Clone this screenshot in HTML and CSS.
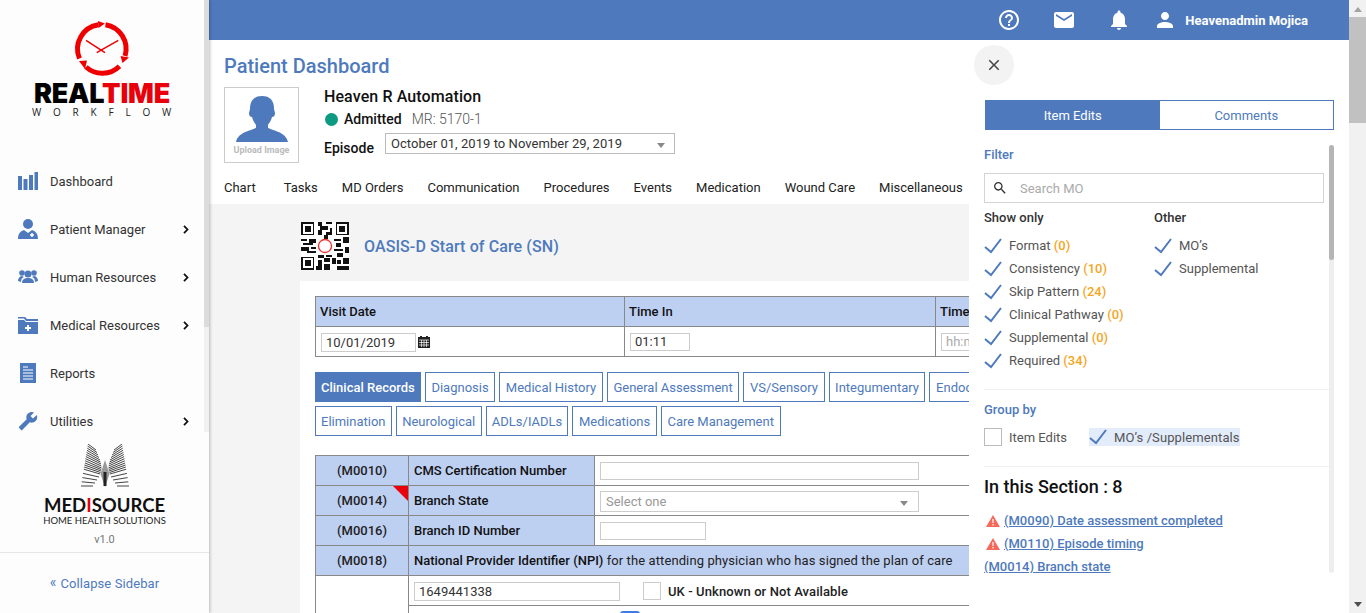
FILE: index.html
```html
<!DOCTYPE html>
<html lang="en">
<head>
    <meta charset="UTF-8">
    <title>Patient Dashboard</title>
    <link rel="stylesheet" href="styles.css">
</head>
<body>
<!--sidebar-->
<div class="sidebar">
    <div class="sideTop">
        <div class="sideContent">
            <div class="logo">
                <svg class="clock" width="60" height="60" viewBox="0 0 60 60">
                    <g fill="none" stroke="#ee0000" stroke-width="5">
                        <path d="M7.500 39.500 A24.500 24.500 0 0 1 26.500 5.700"/>
                        <path d="M33.500 5.700 A24.500 24.500 0 0 1 53 37"/>
                        <path d="M47.500 47.200 A24.500 24.500 0 0 1 14 48"/>
                    </g>
                    <g fill="#ee0000">
                        <path d="M26 2 L33 4.500 L26.500 9 Z"/>
                        <path d="M48.500 37 L57 38.500 L50.500 44 Z"/>
                        <path d="M7 42 L15 41.500 L13 50 Z"/>
                    </g>
                    <path d="M14 21.300 L33 33.700 M46.300 21.300 L24.700 33.700" fill="none" stroke="#ee0000" stroke-width="1.500"/>
                </svg>
                <div class="brand"><span>REAL</span><span class="red">TIME</span></div>
                <div class="brandSub">WORKFLOW</div>
            </div>
            <div class="menu">
                <div class="menuItem">
                    <svg class="menuIcon" viewBox="0 0 20 20"><path d="M0 5h4v14H0zM5.500 8h4v11h-4zM11 4h4v15h-4zM16.500 1h3.500v18h-3.500z" fill="#4e7abd"/></svg>
                    <span>Dashboard</span>
                </div>
                <div class="menuItem">
                    <svg class="menuIcon" viewBox="0 0 20 20"><circle cx="10" cy="5" r="5" fill="#4e7abd"/><path d="M0 20c0-6 3-8 6-9l4 3 4-3c3 1 6 3 6 9z" fill="#4e7abd"/><path d="M14 14v4M12 16h4" stroke="#fff" stroke-width="1.500"/></svg>
                    <span>Patient Manager</span>
                    <svg class="chevron" viewBox="0 0 6 9"><path d="M1 .8l3.500 3.700L1 8.200" fill="none" stroke="#111" stroke-width="1.800"/></svg>
                </div>
                <div class="menuItem">
                    <svg class="menuIcon" viewBox="0 0 20 20"><g fill="#4e7abd"><circle cx="10" cy="7" r="3.500"/><circle cx="4" cy="6" r="2.800"/><circle cx="16" cy="6" r="2.800"/><path d="M4 16c0-4 3-5 6-5s6 1 6 5z"/><path d="M0 14c0-3 2-5 4-5l2 1c-2 1-3 2-3 5zM20 14c0-3-2-5-4-5l-2 1c2 1 3 2 3 5z"/></g></svg>
                    <span>Human Resources</span>
                    <svg class="chevron" viewBox="0 0 6 9"><path d="M1 .8l3.500 3.700L1 8.200" fill="none" stroke="#111" stroke-width="1.800"/></svg>
                </div>
                <div class="menuItem">
                    <svg class="menuIcon" viewBox="0 0 20 20"><path d="M0 2h7l2 2h11v2H8L6 3.500H0zM0 5h6l2 2h12v12H0z" fill="#4e7abd"/><path d="M10 10v6M7 13h6" stroke="#fff" stroke-width="2"/></svg>
                    <span>Medical Resources</span>
                    <svg class="chevron" viewBox="0 0 6 9"><path d="M1 .8l3.500 3.700L1 8.200" fill="none" stroke="#111" stroke-width="1.800"/></svg>
                </div>
                <div class="menuItem">
                    <svg class="menuIcon" viewBox="0 0 20 20"><path d="M2 0h16v20H2z" fill="#4e7abd"/><path d="M5 4h5M5 7h10M5 10h10M5 13h10M5 16h10" stroke="#fff" stroke-width="1"/></svg>
                    <span>Reports</span>
                </div>
                <div class="menuItem">
                    <svg class="menuIcon" viewBox="0 0 24 24"><path transform="matrix(-1 0 0 1 24 0)" d="M22.700 19l-9.100-9.100c.9-2.300.4-5-1.500-6.900-2-2-5-2.400-7.400-1.300L9 6 6 9 1.600 4.700C.4 7.100.9 10.100 2.900 12.100c1.900 1.900 4.600 2.400 6.900 1.500l9.100 9.100c.4.4 1 .4 1.400 0l2.300-2.300c.5-.4.5-1.100.1-1.400z" fill="#4e7abd"/></svg>
                    <span>Utilities</span>
                    <svg class="chevron" viewBox="0 0 6 9"><path d="M1 .8l3.500 3.700L1 8.200" fill="none" stroke="#111" stroke-width="1.800"/></svg>
                </div>
            </div>
        </div>
        <div class="sideBar"><div class="sideThumb"></div></div>
    </div>
    <div class="sideBottom">
        <svg class="mLogo" width="48" height="43" viewBox="0 0 48 43">
            <path d="M24 16L19.500 30 24 43 28.500 30z" fill="#999"/>
            <path d="M22.500 28h3v14h-3z" fill="#222"/>
            <g fill="none" stroke="#444" stroke-width="1">
                <path d="M7 0L15 6M6.600 2L16 8.500M6.300 4.200L17 11M6 6.300L18 13.500M5.600 8.400L19 16M5.200 10.500L19.500 18M4.900 12.600L20 20M4.500 14.700L20.300 22M4.200 16.800L20.500 24M3.900 19L20.300 25.500M3.500 21L20 27M3.200 23L19.500 28.500M2.800 25.200L19 30M2.100 29.400L18 33M1.400 33.600L16 36M.7 37.800L14 39M0 42L12 42"/>
                <path transform="matrix(-1 0 0 1 48 0)" d="M7 0L15 6M6.600 2L16 8.500M6.300 4.200L17 11M6 6.300L18 13.500M5.600 8.400L19 16M5.200 10.500L19.500 18M4.900 12.600L20 20M4.500 14.700L20.300 22M4.200 16.800L20.500 24M3.900 19L20.300 25.500M3.500 21L20 27M3.200 23L19.500 28.500M2.800 25.200L19 30M2.100 29.400L18 33M1.400 33.600L16 36M.7 37.800L14 39M0 42L12 42"/>
            </g>
        </svg>
        <div class="mName">MED<span class="red">I</span>SOURCE</div>
        <div class="mSub">HOME HEALTH SOLUTIONS</div>
        <div class="version">v1.0</div>
        <div class="collapse"><span class="collapseArrow">&laquo;</span>Collapse Sidebar</div>
    </div>
</div>

<!--main-->
<div class="main">
    <div class="topBar">
        <svg class="topIcon" viewBox="0 0 24 24"><path d="M11 18h2v-2h-2v2zm1-16C6.480 2 2 6.480 2 12s4.480 10 10 10 10-4.480 10-10S17.520 2 12 2zm0 18c-4.410 0-8-3.590-8-8s3.590-8 8-8 8 3.590 8 8-3.590 8-8 8zm0-14c-2.210 0-4 1.790-4 4h2c0-1.100.9-2 2-2s2 .9 2 2c0 2-3 1.750-3 5h2c0-2.250 3-2.500 3-5 0-2.210-1.790-4-4-4z"/></svg>
        <svg class="topIcon" viewBox="0 0 24 24"><path d="M20 4H4c-1.100 0-1.990.9-1.990 2L2 18c0 1.100.9 2 2 2h16c1.100 0 2-.9 2-2V6c0-1.100-.9-2-2-2zm0 4l-8 5-8-5V6l8 5 8-5v2z"/></svg>
        <svg class="topIcon bellIcon" viewBox="0 0 24 24"><path d="M12 22c1.100 0 2-.9 2-2h-4c0 1.100.89 2 2 2zm6-6v-5c0-3.070-1.640-5.640-4.500-6.320V4c0-.83-.67-1.500-1.500-1.500s-1.500.67-1.500 1.500v.68C7.630 5.360 6 7.920 6 11v5l-2 2v1h16v-1l-2-2z"/></svg>
        <svg class="topIcon userIcon" viewBox="0 0 24 24"><path d="M12 12c2.210 0 4-1.790 4-4s-1.790-4-4-4-4 1.790-4 4 1.790 4 4 4zm0 2c-2.670 0-8 1.340-8 4v2h16v-2c0-2.660-5.330-4-8-4z"/></svg>
        <span class="userName">Heavenadmin Mojica</span>
    </div>

    <div class="pageHead">
        <div class="pageTitle">Patient Dashboard</div>
        <div class="patient">
            <div class="avatar">
                <svg width="52" height="46" viewBox="0 0 52 48" preserveAspectRatio="none"><path d="M26 0c8 0 12 5 12 13 0 2 1 3 1 5s-1 4-3 4c-1 4-3 7-4 8v3c4 3 18 4 20 15H0c2-11 16-12 20-15v-3c-1-1-3-4-4-8-2 0-3-2-3-4s1-3 1-5c0-8 4-13 12-13z" fill="#4e7abd"/></svg>
                <span>Upload Image</span>
            </div>
            <div class="patientInfo">
                <div class="patientName">Heaven R Automation</div>
                <div class="statusRow">
                    <i class="statusDot"></i>
                    <span class="statusText">Admitted</span>
                    <span class="mrText">MR: 5170-1</span>
                </div>
                <div class="episodeRow">
                    <span class="episodeLabel">Episode</span>
                    <div class="episodeSelect">
                        <span>October 01, 2019 to November 29, 2019</span>
                        <i class="caret"></i>
                    </div>
                </div>
            </div>
        </div>
        <div class="pageNav">
            <span class="navFirst">Chart</span>
            <span>Tasks</span>
            <span>MD Orders</span>
            <span>Communication</span>
            <span>Procedures</span>
            <span>Events</span>
            <span>Medication</span>
            <span>Wound Care</span>
            <span>Miscellaneous</span>
        </div>
    </div>

    <div class="formArea">
        <div class="formTitle">
            <svg class="qr" width="48" height="48" viewBox="0 0 25 25" shape-rendering="crispEdges">
                <rect width="25" height="25" fill="#fff"/>
                <path d="M0 0h7v7H0zM1 1v5h5V1zM2 2h3v3H2zM18 0h7v7h-7zM19 1v5h5V1zM20 2h3v3h-3zM0 18h7v7H0zM1 19v5h5v-5zM2 20h3v3H2z" fill-rule="evenodd" fill="#111"/>
                <path d="M9 0h2v2H9zM13 0h3v1h-3zM10 2h4v2h-4zM9 4h2v3H9zM13 5h3v2h-3zM12 7h2v2h-2zM15 3h1v2h-1zM0 9h3v1H0zM4 9h4v2H4zM1 11h5v1H1zM0 13h4v2H0zM5 13h3v1H5zM3 15h5v1H3zM17 9h4v1h-4zM22 8h3v3h-3zM18 11h3v2h-3zM17 14h5v1h-5zM23 13h2v3h-2zM19 16h3v2h-3zM9 17h3v2H9zM13 17h3v1h-3zM9 20h2v3H9zM12 19h3v2h-3zM16 19h2v3h-2zM12 22h3v3h-3zM19 20h2v2h-2zM22 19h3v3h-3zM19 23h6v2h-6zM8 23h3v2H8z" fill="#111"/>
                <circle cx="12.500" cy="12.500" r="3.400" fill="#fff" stroke="#ee3333" stroke-width="0.7" shape-rendering="auto"/>
            </svg>
            <span>OASIS-D Start of Care (SN)</span>
        </div>

        <div class="sheet">
            <table class="visitTable">
                <tr>
                    <th class="colVisit">Visit Date</th>
                    <th class="colTime">Time In</th>
                    <th>Time Out</th>
                </tr>
                <tr>
                    <td>
                        <div class="dateCell">
                            <div class="field dateField">10/01/2019</div>
                            <svg width="12" height="12" viewBox="0 0 12 12"><path d="M2 0h2v1h4V0h2v1h2v11H0V1h2z" fill="#222"/><path d="M1 4h10M1 6.500h10M1 9h10M3.500 4v7M6 4v7M8.500 4v7" stroke="#fff" stroke-width="0.7"/></svg>
                        </div>
                    </td>
                    <td><div class="field timeField">01:11</div></td>
                    <td><div class="field timeField placeholder">hh:mm</div></td>
                </tr>
            </table>

            <div class="formTabs">
                <div class="formTab active">Clinical Records</div>
                <div class="formTab">Diagnosis</div>
                <div class="formTab">Medical History</div>
                <div class="formTab">General Assessment</div>
                <div class="formTab">VS/Sensory</div>
                <div class="formTab">Integumentary</div>
                <div class="formTab">Endocrine</div>
                <div class="formTab tight">Elimination</div>
                <div class="formTab">Neurological</div>
                <div class="formTab tight">ADLs/IADLs</div>
                <div class="formTab">Medications</div>
                <div class="formTab">Care Management</div>
            </div>

            <table class="questionTable">
                <tr>
                    <td class="code">(M0010)</td>
                    <td class="label colLabel">CMS Certification Number</td>
                    <td class="answer"><div class="field wideField"></div></td>
                </tr>
                <tr>
                    <td class="code flagged">(M0014)</td>
                    <td class="label">Branch State</td>
                    <td class="answer">
                        <div class="field wideField selectField"><span>Select one</span><i class="caret"></i></div>
                    </td>
                </tr>
                <tr>
                    <td class="code">(M0016)</td>
                    <td class="label">Branch ID Number</td>
                    <td class="answer"><div class="field idField"></div></td>
                </tr>
                <tr>
                    <td class="code">(M0018)</td>
                    <td class="label" colspan="2">National Provider Identifier (NPI) <span class="labelNormal">for the attending physician who has signed the plan of care</span></td>
                </tr>
                <tr>
                    <td class="empty" rowspan="2"></td>
                    <td class="answer" colspan="2">
                        <div class="npiRow">
                            <div class="field npiField">1649441338</div>
                            <i class="box"></i>
                            <span class="npiText">UK - Unknown or Not Available</span>
                        </div>
                    </td>
                </tr>
                <tr>
                    <td class="answer lastRow" colspan="2"><i class="blueBox"></i></td>
                </tr>
            </table>
        </div>
    </div>

    <!--right panel-->
    <div class="panel">
        <div class="closeBtn">
            <svg width="18" height="18" viewBox="0 0 24 24"><path d="M19 6.410L17.590 5 12 10.590 6.410 5 5 6.410 10.590 12 5 17.590 6.410 19 12 13.410 17.590 19 19 17.590 13.410 12z" fill="#444"/></svg>
        </div>
        <div class="panelTabs">
            <div class="panelTab active">Item Edits</div>
            <div class="panelTab">Comments</div>
        </div>
        <div class="panelScroll">
            <div class="panelBody">
                <div class="blueHead filterHead">Filter</div>
                <div class="searchBox">
                    <svg width="16" height="16" viewBox="0 0 24 24"><path d="M15.500 14h-.79l-.28-.27C15.410 12.590 16 11.110 16 9.500 16 5.910 13.090 3 9.500 3S3 5.910 3 9.500 5.910 16 9.500 16c1.610 0 3.090-.59 4.230-1.570l.27.28v.79l5 4.990L20.490 19l-4.990-5zm-6 0C7.010 14 5 11.990 5 9.500S7.010 5 9.500 5 14 7.010 14 9.500 11.990 14 9.500 14z" fill="#333"/></svg>
                    <span>Search MO</span>
                </div>
                <div class="filterCols">
                    <div class="filterCol">
                        <div class="colHead">Show only</div>
                        <div class="checkRow"><svg class="check" viewBox="0 0 18 16"><path d="M1 9l6 5L17 1" /></svg>Format <b>(0)</b></div>
                        <div class="checkRow"><svg class="check" viewBox="0 0 18 16"><path d="M1 9l6 5L17 1" /></svg>Consistency <b>(10)</b></div>
                        <div class="checkRow"><svg class="check" viewBox="0 0 18 16"><path d="M1 9l6 5L17 1" /></svg>Skip Pattern <b>(24)</b></div>
                        <div class="checkRow"><svg class="check" viewBox="0 0 18 16"><path d="M1 9l6 5L17 1" /></svg>Clinical Pathway <b>(0)</b></div>
                        <div class="checkRow"><svg class="check" viewBox="0 0 18 16"><path d="M1 9l6 5L17 1" /></svg>Supplemental <b>(0)</b></div>
                        <div class="checkRow"><svg class="check" viewBox="0 0 18 16"><path d="M1 9l6 5L17 1" /></svg>Required <b>(34)</b></div>
                    </div>
                    <div class="filterCol">
                        <div class="colHead">Other</div>
                        <div class="checkRow"><svg class="check" viewBox="0 0 18 16"><path d="M1 9l6 5L17 1" /></svg>MO’s</div>
                        <div class="checkRow"><svg class="check" viewBox="0 0 18 16"><path d="M1 9l6 5L17 1" /></svg>Supplemental</div>
                    </div>
                </div>
                <div class="groupSection">
                    <div class="blueHead">Group by</div>
                    <div class="groupRow">
                        <div class="groupItem"><i class="box smallBox"></i>Item Edits</div>
                        <div class="groupItem selected"><svg class="check" viewBox="0 0 18 16"><path d="M1 9l6 5L17 1" /></svg>MO’s /Supplementals</div>
                    </div>
                </div>
                <div class="sectionHead">In this Section : 8</div>
                <div class="linkRow">
                    <svg class="warn" viewBox="0 0 14 12"><path d="M7 0l7 12H0z" fill="#f4695c"/><path d="M7 4v4M7 9v1.500" stroke="#fff" stroke-width="1.200"/></svg>
                    <a href="#">(M0090) Date assessment completed</a>
                </div>
                <div class="linkRow">
                    <svg class="warn" viewBox="0 0 14 12"><path d="M7 0l7 12H0z" fill="#f4695c"/><path d="M7 4v4M7 9v1.500" stroke="#fff" stroke-width="1.200"/></svg>
                    <a href="#">(M0110) Episode timing</a>
                </div>
                <div class="linkRow"><a href="#">(M0014) Branch state</a></div>
            </div>
            <div class="panelTrack"><div class="panelThumb"></div></div>
        </div>
    </div>
</div>

<!--page scrollbar-->
<div class="pageBar">
    <i class="barUp"></i>
    <div class="pageThumb"></div>
    <div class="barFill"></div>
    <i class="barDown"></i>
</div>
</body>
</html>
```

FILE: styles.css
```css
* {
    margin: 0;
    padding: 0;
    box-sizing: border-box;
}

html, body {
    height: 100%;
    overflow: hidden;
}

body {
    display: flex;
    font-family: Roboto, "Liberation Sans", sans-serif;
    font-size: 13px;
    color: #222;
    background: #fff;
}

.red {
    color: #e8000b;
}

/* sidebar */
.sidebar {
    width: 209px;
    flex-shrink: 0;
    display: flex;
    flex-direction: column;
    background: #fdfdfd;
    box-shadow: 1px 0 3px rgba(0, 0, 0, 0.25);
    position: relative;
    z-index: 2;
}

.sideTop {
    height: 432px;
    display: flex;
}

.sideContent {
    flex-grow: 1;
}

.sideBar {
    width: 5px;
    background: #f1f1f1;
}

.sideThumb {
    height: 327px;
    background: #dcdcdc;
}

.logo {
    height: 157px;
    padding-top: 19px;
    display: flex;
    flex-direction: column;
    align-items: center;
}

.clock {
    flex-shrink: 0;
}

.brand {
    font-family: Inter, "Liberation Sans", sans-serif;
    font-weight: 900;
    font-size: 27px;
    line-height: 21px;
    margin-top: 4px;
    letter-spacing: -0.2px;
    color: #000;
}

.brandSub {
    font-family: "Open Sans", sans-serif;
    font-size: 10px;
    line-height: 12px;
    margin-top: 2px;
    letter-spacing: 11.800px;
    margin-right: -11px;
    color: #222;
}

.menuItem {
    height: 48px;
    padding-left: 18px;
    display: flex;
    align-items: center;
    font-size: 13px;
    color: #333;
}

.menuIcon {
    width: 20px;
    height: 20px;
    margin-right: 12px;
    flex-shrink: 0;
}

.chevron {
    width: 6px;
    height: 9px;
    margin-left: auto;
    margin-right: 15px;
}

.sideBottom {
    flex-grow: 1;
    display: flex;
    flex-direction: column;
    align-items: center;
}

.mLogo {
    margin-top: 12px;
}

.mName {
    font-family: Lato, sans-serif;
    font-weight: 700;
    font-size: 18.500px;
    line-height: 18px;
    margin-top: 9px;
    color: #111;
}

.mSub {
    font-family: Lato, sans-serif;
    font-size: 9.500px;
    line-height: 12px;
    margin-top: 1px;
    color: #222;
}

.version {
    font-size: 11px;
    line-height: 14px;
    margin-top: 6px;
    color: #777;
}

.collapse {
    width: 100%;
    flex-grow: 1;
    margin-top: 5px;
    border-top: 1px solid #e6e6e6;
    display: flex;
    align-items: center;
    justify-content: center;
    gap: 4px;
    font-size: 13px;
    letter-spacing: 0.1px;
    color: #4e7abd;
}

.collapseArrow {
    font-size: 14px;
    margin-bottom: 2px;
}

/* main */
.main {
    flex-grow: 1;
    min-width: 0;
    display: flex;
    flex-direction: column;
    position: relative;
    overflow: hidden;
}

.topBar {
    height: 40px;
    flex-shrink: 0;
    background: #4e7abd;
    display: flex;
    align-items: center;
    justify-content: flex-end;
    padding-right: 41px;
}

.topIcon {
    width: 24px;
    height: 24px;
    fill: #fff;
    margin-right: 31px;
}

.bellIcon {
    margin-right: 22px;
}

.userIcon {
    margin-right: 8px;
}

.userName {
    font-size: 13px;
    font-weight: 700;
    color: #fff;
}

.pageHead {
    height: 164px;
    flex-shrink: 0;
    padding: 14px 0 0 15px;
    background: #fff;
}

.pageTitle {
    font-size: 20px;
    font-weight: 500;
    line-height: 24px;
    color: #4e7abd;
}

.patient {
    display: flex;
    margin-top: 9px;
}

.avatar {
    width: 75px;
    height: 76px;
    border: 1px solid #ccc;
    display: flex;
    flex-direction: column;
    align-items: center;
    padding-top: 8px;
}

.avatar span {
    font-size: 9px;
    font-weight: 700;
    color: #bbb;
    margin-top: 3px;
}

.patientInfo {
    margin-left: 25px;
}

.patientName {
    font-size: 16px;
    font-weight: 500;
    line-height: 18px;
    letter-spacing: 0.1px;
    padding-top: 1px;
    height: 19px;
    color: #111;
}

.statusRow {
    display: flex;
    align-items: center;
    margin-top: 4px;
    height: 18px;
}

.statusDot {
    width: 13px;
    height: 13px;
    border-radius: 50%;
    background: #0d9a82;
    margin: 1px 6px 0 1px;
}

.statusText {
    font-size: 14px;
    font-weight: 500;
    color: #111;
}

.mrText {
    font-size: 14px;
    font-weight: 300;
    color: #555;
    margin-left: 10px;
}

.episodeRow {
    display: flex;
    align-items: flex-start;
    margin-top: 5px;
}

.episodeLabel {
    font-size: 14px;
    font-weight: 500;
    line-height: 20px;
    margin: 5px 11px 0 0;
    color: #111;
}

.episodeSelect {
    width: 290px;
    height: 21px;
    border: 1px solid #bbb;
    display: flex;
    align-items: center;
    justify-content: space-between;
    padding: 0 9px 0 5px;
    font-size: 13px;
    letter-spacing: 0.05px;
    color: #333;
}

.caret {
    width: 0;
    height: 0;
    border-left: 4px solid transparent;
    border-right: 4px solid transparent;
    border-top: 5px solid #888;
    margin-top: 3px;
}

.pageNav {
    display: flex;
    gap: 24px;
    margin-top: 17px;
    font-size: 13px;
    line-height: 15px;
    color: #222;
}

.navFirst {
    margin-right: 4px;
}

/* form */
.formArea {
    flex-grow: 1;
    min-height: 0;
    background: #f4f4f4;
    padding-left: 91px;
    overflow: hidden;
}

.formTitle {
    height: 77px;
    padding: 18px 0 0 1px;
    display: flex;
    align-items: flex-start;
}

.formTitle span {
    font-size: 16px;
    font-weight: 500;
    letter-spacing: 0.1px;
    color: #4e7abd;
    margin: 15px 0 0 15px;
}

.sheet {
    width: 900px;
    height: 400px;
    padding: 15px;
    background: #fff;
}

.visitTable, .questionTable {
    border-collapse: collapse;
    table-layout: fixed;
    width: 860px;
}

.visitTable th {
    height: 30px;
    background: #bed0f2;
    border: 1px solid #888;
    text-align: left;
    padding-left: 4px;
    font-weight: 500;
    color: #111;
}

.visitTable td {
    height: 30px;
    border: 1px solid #888;
    padding-left: 5px;
}

.colVisit {
    width: 309px;
}

.colTime {
    width: 311px;
}

.field {
    height: 18px;
    border: 1px solid #ccc;
    background: #fff;
    padding-left: 4px;
    line-height: 16px;
    font-size: 13px;
    color: #333;
}

.dateCell {
    display: flex;
    align-items: center;
    gap: 2px;
}

.dateField {
    width: 95px;
    height: 19px;
    line-height: 18px;
    margin-top: 1px;
}

.timeField {
    width: 60px;
}

.placeholder {
    color: #aaa;
}

.formTabs {
    width: 700px;
    display: flex;
    flex-wrap: wrap;
    gap: 4px;
    margin-top: 15px;
}

.formTab {
    height: 30px;
    line-height: 29px;
    padding: 0 5.600px;
    border: 1px solid #4e7abd;
    color: #4e7abd;
    font-size: 13px;
}

.formTab.tight {
    padding: 0 5px;
}

.formTab.active {
    padding: 0 5px;
    background: #4e7abd;
    color: #fff;
    font-weight: 500;
}

.questionTable {
    margin-top: 19px;
}

.questionTable td {
    height: 30px;
    border: 1px solid #888;
}

.code {
    width: 93px;
    background: #bed0f2;
    text-align: center;
    font-weight: 500;
    color: #222;
}

.flagged {
    position: relative;
}

.flagged::after {
    content: "";
    position: absolute;
    top: 0;
    right: 0;
    border-top: 15px solid #e8000b;
    border-left: 15px solid transparent;
}

.label {
    background: #bed0f2;
    padding-left: 5px;
    font-weight: 500;
    color: #111;
}

.colLabel {
    width: 186px;
}

.labelNormal {
    font-weight: 400;
    letter-spacing: 0.1px;
    color: #222;
}

.answer {
    padding-left: 5px;
}

.wideField {
    width: 319px;
}

.selectField {
    display: flex;
    align-items: center;
    justify-content: space-between;
    height: 21px;
    margin-top: 1px;
    padding: 1px 10px 0 5px;
    color: #999;
}

.idField {
    width: 106px;
}

.npiRow {
    display: flex;
    align-items: center;
    padding-top: 1px;
}

.npiField {
    width: 206px;
    height: 19px;
    line-height: 18px;
}

.box {
    display: block;
    width: 18px;
    height: 18px;
    border: 1px solid #ccc;
    background: #fff;
    margin-left: 23px;
}

.npiText {
    margin-left: 7px;
    font-weight: 500;
    letter-spacing: 0.1px;
    color: #222;
}

.empty {
    background: #fff;
}

.lastRow {
    vertical-align: top;
    padding-left: 211px;
    padding-top: 5px;
}

.blueBox {
    display: block;
    width: 20px;
    height: 20px;
    border-radius: 3px;
    background: #3f7be0;
}

/* right panel */
.panel {
    position: absolute;
    top: 40px;
    right: 0;
    bottom: 0;
    width: 380px;
    background: #fff;
    padding: 60px 15px 0 15px;
}

.closeBtn {
    position: absolute;
    top: 5px;
    left: 5px;
    width: 40px;
    height: 40px;
    border-radius: 50%;
    background: #f3f3f3;
    display: flex;
    align-items: center;
    justify-content: center;
}

.panelTabs {
    display: flex;
    height: 30px;
    margin-left: 1px;
    border: 1px solid #4e7abd;
}

.panelTab {
    width: 174px;
    text-align: center;
    line-height: 28px;
    padding-top: 1px;
    font-size: 13px;
    color: #4e7abd;
}

.panelTab.active {
    background: #4e7abd;
    color: #fff;
}

.panelTab + .panelTab {
    flex-grow: 1;
}

.panelScroll {
    display: flex;
    height: 428px;
    margin-top: 15px;
    overflow: hidden;
}

.panelBody {
    flex-grow: 1;
    min-width: 0;
}

.panelTrack {
    width: 5px;
    background: #eee;
    border-radius: 3px;
}

.panelThumb {
    height: 115px;
    background: #b5b5b5;
    border-radius: 3px;
}

.blueHead {
    font-size: 13px;
    font-weight: 500;
    line-height: 18px;
    color: #4e7abd;
}

.filterHead {
    padding-top: 1px;
    height: 19px;
}

.searchBox {
    width: 340px;
    height: 30px;
    margin-top: 9px;
    border: 1px solid #d4d4d4;
    display: flex;
    align-items: center;
    padding-left: 7px;
    font-size: 13px;
    color: #aaa;
}

.searchBox span {
    margin-left: 12px;
}

.filterCols {
    display: flex;
    margin-top: 6px;
    height: 181px;
    border-bottom: 1px solid #f0f0f0;
}

.filterCol {
    width: 170px;
}

.colHead {
    font-weight: 500;
    line-height: 18px;
    color: #333;
    margin-bottom: 7px;
}

.checkRow {
    height: 23px;
    display: flex;
    align-items: center;
    color: #555;
    white-space: pre;
}

.checkRow b {
    font-weight: 500;
    color: #f5a623;
}

.check {
    width: 18px;
    height: 16px;
    margin-right: 7px;
    flex-shrink: 0;
    fill: none;
    stroke: #4e7abd;
    stroke-width: 2;
}

.groupSection {
    height: 77px;
    padding-top: 11px;
    border-bottom: 1px solid #f0f0f0;
}

.groupRow {
    display: flex;
    gap: 22px;
    margin-top: 9px;
}

.groupItem {
    height: 18px;
    display: flex;
    align-items: center;
    color: #555;
}

.groupItem .smallBox {
    margin: 0 7px 0 0;
    border-color: #bbb;
}

.groupItem.selected {
    background: #e3ecfb;
    letter-spacing: 0.1px;
}

.sectionHead {
    font-size: 18px;
    font-weight: 500;
    line-height: 22px;
    margin: 9px 0 11px;
    color: #111;
}

.linkRow {
    height: 23px;
    display: flex;
    align-items: center;
}

.linkRow a {
    color: #4e7abd;
    font-size: 13px;
    font-weight: 500;
}

.warn {
    width: 14px;
    height: 12px;
    margin-right: 4px;
    margin-left: 2px;
}

/* page scrollbar */
.pageBar {
    width: 17px;
    flex-shrink: 0;
    background: #f1f1f1;
    display: flex;
    flex-direction: column;
    align-items: center;
}

.barUp {
    margin: 7px 0 5px;
    border-left: 4px solid transparent;
    border-right: 4px solid transparent;
    border-bottom: 5px solid #a3a3a3;
}

.pageThumb {
    width: 100%;
    height: 106px;
    background: #c1c1c1;
}

.barFill {
    flex-grow: 1;
}

.barDown {
    margin-bottom: 6px;
    border-left: 4px solid transparent;
    border-right: 4px solid transparent;
    border-top: 5px solid #505050;
}
```
